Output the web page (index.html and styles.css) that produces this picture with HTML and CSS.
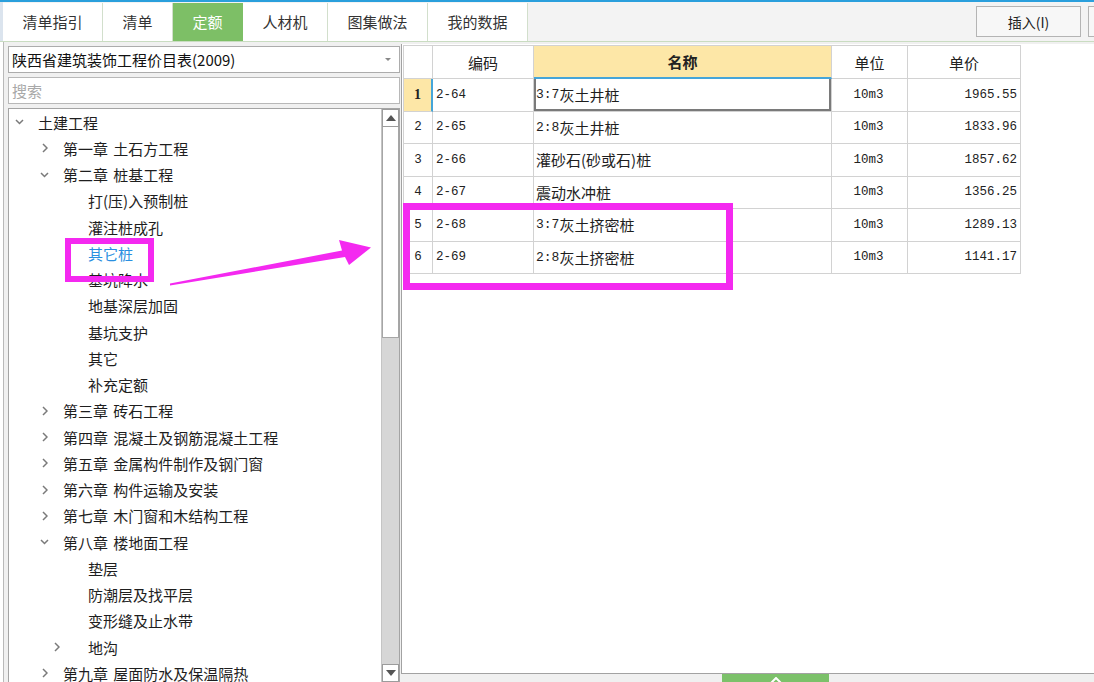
FILE: index.html
```html
<!DOCTYPE html>
<html lang="zh-CN">
<head>
<meta charset="utf-8">
<title>定额</title>
<link rel="stylesheet" href="styles.css">
</head>
<body>
<div class="topline"></div>
<div class="tabbar">
  <div class="edge"></div>
  <div class="tab">清单指引</div>
  <div class="tab">清单</div>
  <div class="tab active">定额</div>
  <div class="tab">人材机</div>
  <div class="tab">图集做法</div>
  <div class="tab">我的数据</div>
  <div class="spacer"></div>
  <button class="btn">插入(I)</button>
  <button class="btn btn-cut"></button>
</div>
<div class="main">
  <div class="lstrip"></div>
  <div class="left">
    <div class="select">陕西省建筑装饰工程价目表(2009)<span class="caret"></span></div>
    <div class="search">搜索</div>
    <div class="treebox">
      <div class="tree">
        <div class="row l0"><span class="tg"><svg width="9" height="6" viewBox="0 0 9 6"><polyline points="1,1 4.5,4.5 8,1" class="chev"/></svg></span><span>土建工程</span></div>
        <div class="row l1"><span class="tg"><svg width="6" height="10" viewBox="0 0 6 10"><polyline points="1,1 5,5 1,9" class="chev"/></svg></span><span>第一章 土石方工程</span></div>
        <div class="row l1"><span class="tg"><svg width="9" height="6" viewBox="0 0 9 6"><polyline points="1,1 4.5,4.5 8,1" class="chev"/></svg></span><span>第二章 桩基工程</span></div>
        <div class="row l2"><span class="tg"></span><span>打(压)入预制桩</span></div>
        <div class="row l2"><span class="tg"></span><span>灌注桩成孔</span></div>
        <div class="row l2 sel"><span class="tg"></span><span>其它桩</span></div>
        <div class="row l2"><span class="tg"></span><span>基坑降水</span></div>
        <div class="row l2"><span class="tg"></span><span>地基深层加固</span></div>
        <div class="row l2"><span class="tg"></span><span>基坑支护</span></div>
        <div class="row l2"><span class="tg"></span><span>其它</span></div>
        <div class="row l2"><span class="tg"></span><span>补充定额</span></div>
        <div class="row l1"><span class="tg"><svg width="6" height="10" viewBox="0 0 6 10"><polyline points="1,1 5,5 1,9" class="chev"/></svg></span><span>第三章 砖石工程</span></div>
        <div class="row l1"><span class="tg"><svg width="6" height="10" viewBox="0 0 6 10"><polyline points="1,1 5,5 1,9" class="chev"/></svg></span><span>第四章 混凝土及钢筋混凝土工程</span></div>
        <div class="row l1"><span class="tg"><svg width="6" height="10" viewBox="0 0 6 10"><polyline points="1,1 5,5 1,9" class="chev"/></svg></span><span>第五章 金属构件制作及钢门窗</span></div>
        <div class="row l1"><span class="tg"><svg width="6" height="10" viewBox="0 0 6 10"><polyline points="1,1 5,5 1,9" class="chev"/></svg></span><span>第六章 构件运输及安装</span></div>
        <div class="row l1"><span class="tg"><svg width="6" height="10" viewBox="0 0 6 10"><polyline points="1,1 5,5 1,9" class="chev"/></svg></span><span>第七章 木门窗和木结构工程</span></div>
        <div class="row l1"><span class="tg"><svg width="9" height="6" viewBox="0 0 9 6"><polyline points="1,1 4.5,4.5 8,1" class="chev"/></svg></span><span>第八章 楼地面工程</span></div>
        <div class="row l2"><span class="tg"></span><span>垫层</span></div>
        <div class="row l2"><span class="tg"></span><span>防潮层及找平层</span></div>
        <div class="row l2"><span class="tg"></span><span>变形缝及止水带</span></div>
        <div class="row l2x"><span class="tg"><svg width="6" height="10" viewBox="0 0 6 10"><polyline points="1,1 5,5 1,9" class="chev"/></svg></span><span>地沟</span></div>
        <div class="row l1"><span class="tg"><svg width="6" height="10" viewBox="0 0 6 10"><polyline points="1,1 5,5 1,9" class="chev"/></svg></span><span>第九章 屋面防水及保温隔热</span></div>
      </div>
      <div class="vscroll">
        <div class="sbtn"><svg width="10" height="6" viewBox="0 0 10 6"><polygon points="0,6 5,0 10,6" fill="#555"/></svg></div>
        <div class="thumb"></div>
        <div class="track"></div>
        <div class="sbtn"><svg width="10" height="6" viewBox="0 0 10 6"><polygon points="0,0 10,0 5,6" fill="#555"/></svg></div>
      </div>
    </div>
  </div>
  <div class="right">
    <div class="panel">
      <div class="grid">
        <div class="c h"></div>
        <div class="c h">编码</div>
        <div class="c h hsel">名称</div>
        <div class="c h">单位</div>
        <div class="c h">单价</div>

        <div class="c n nsel">1</div>
        <div class="c code csel">2-64</div>
        <div class="c name namesel"><span class="m">3:7</span>灰土井桩</div>
        <div class="c unit">10m3</div>
        <div class="c price">1965.55</div>

        <div class="c n">2</div>
        <div class="c code">2-65</div>
        <div class="c name"><span class="m">2:8</span>灰土井桩</div>
        <div class="c unit">10m3</div>
        <div class="c price">1833.96</div>

        <div class="c n">3</div>
        <div class="c code">2-66</div>
        <div class="c name">灌砂石(砂或石)桩</div>
        <div class="c unit">10m3</div>
        <div class="c price">1857.62</div>

        <div class="c n">4</div>
        <div class="c code">2-67</div>
        <div class="c name">震动水冲桩</div>
        <div class="c unit">10m3</div>
        <div class="c price">1356.25</div>

        <div class="c n">5</div>
        <div class="c code">2-68</div>
        <div class="c name"><span class="m">3:7</span>灰土挤密桩</div>
        <div class="c unit">10m3</div>
        <div class="c price">1289.13</div>

        <div class="c n">6</div>
        <div class="c code">2-69</div>
        <div class="c name"><span class="m">2:8</span>灰土挤密桩</div>
        <div class="c unit">10m3</div>
        <div class="c price">1141.17</div>
      </div>
    </div>
    <div class="footer">
      <div class="gtab"><svg width="12" height="7" viewBox="0 0 12 7"><polyline points="1,6 6,1 11,6" fill="none" stroke="#fff" stroke-width="2"/></svg></div>
    </div>
  </div>
</div>
<svg class="anno" width="1094" height="682" viewBox="0 0 1094 682">
  <rect x="68" y="241" width="83" height="38" fill="none" stroke="#f429f0" stroke-width="6"/>
  <rect x="406.5" y="206.5" width="323" height="80" fill="none" stroke="#f429f0" stroke-width="7"/>
  <polygon points="170,283.5 342,250.5 339,240 371,247.5 349,265 345,257 170,285.5" fill="#f429f0"/>
</svg>
</body>
</html>
```

FILE: styles.css
```css
* { box-sizing: border-box; }
html, body { margin: 0; padding: 0; }
body {
  width: 1094px;
  height: 682px;
  overflow: hidden;
  position: relative;
  background: #f0f0f0;
  font-family: "Noto Sans CJK SC", "Noto Sans", sans-serif;
  color: #222;
}

.topline { height: 2px; background: #2a9fdc; }

.tabbar {
  display: flex;
  height: 40px;
  background: #f3f3f3;
  border-bottom: 1px solid #c9dcc1;
}
.edge { width: 3px; flex-shrink: 0; background: #dbe4ee; }
.tab {
  flex-shrink: 0;
  margin-top: 1px;
  padding: 0 19.5px 2px;
  background: #fff;
  border-right: 1px solid #d2dfcc;
  display: flex;
  align-items: center;
  font-size: 15px;
  color: #333;
}
.tab.active { background: #7dbf66; color: #fff; border-right-color: #7dbf66; }
.spacer { flex: 1; }
.btn {
  flex-shrink: 0;
  margin-top: 4px;
  height: 31px;
  width: 105px;
  border: 1px solid #b4b4b4;
  background: #f7f7f7;
  font-family: "Noto Sans CJK SC", sans-serif;
  font-size: 14px;
  color: #222;
  padding: 0;
}
.btn-cut { width: 6px; margin-left: 7px; border-right: none; }

.main { display: flex; height: 641px; }
.lstrip { width: 4px; flex-shrink: 0; background: #fff; border-right: 1px solid #b9b9b9; }
.left {
  width: 392px;
  flex-shrink: 0;
  margin-left: 4px;
  padding-top: 4px;
  display: flex;
  flex-direction: column;
}
.select {
  position: relative;
  height: 27px;
  border: 1px solid #acacac;
  background: #fff;
  font-size: 15px;
  line-height: 25px;
  padding-left: 3px;
  color: #111;
}
.caret {
  position: absolute;
  right: 8px;
  top: 11px;
  width: 0; height: 0;
  border-left: 3px solid transparent;
  border-right: 3px solid transparent;
  border-top: 3px solid #888;
}
.search {
  margin-top: 4px;
  height: 27px;
  border: 1px solid #b8b8b8;
  background: #fff;
  font-size: 15px;
  line-height: 25px;
  padding-left: 3px;
  color: #a8a8a8;
}
.treebox {
  margin-top: 4px;
  flex: 1;
  border: 1px solid #a4a4a4;
  background: #fff;
  display: flex;
  overflow: hidden;
}
.tree { flex: 1; padding-top: 0; overflow: hidden; }
.row {
  height: 26.25px;
  display: flex;
  align-items: center;
  font-size: 15px;
  white-space: nowrap;
  color: #1e1e1e;
  word-spacing: 2px;
}
.row.l0 { padding-left: 3px; }
.row.l1 { padding-left: 28px; }
.row.l2 { padding-left: 53px; }
.row.l2x { padding-left: 53px; }
.tg {
  width: 15px;
  margin-right: 11px;
  display: flex;
  justify-content: center;
  align-items: center;
  flex-shrink: 0;
}
.row.l2x .tg { justify-content: flex-start; margin-left: -12px; width: 27px; padding-left: 4px; }
.chev { fill: none; stroke: #7a7a7a; stroke-width: 1.5; }
.row.sel { color: #2a8fe0; }

.vscroll {
  width: 18px;
  flex-shrink: 0;
  display: flex;
  flex-direction: column;
  background: #d6d6d6;
  border-left: 1px solid #c4c4c4;
}
.sbtn {
  height: 18px;
  background: #fff;
  border: 1px solid #9c9c9c;
  display: flex;
  align-items: center;
  justify-content: center;
}
.thumb { height: 211px; background: #fff; border: 1px solid #a6a6a6; border-top: none; }
.track { flex: 1; }

.right { flex: 1; display: flex; flex-direction: column; margin-left: 1px; }
.panel {
  flex: 1;
  margin-top: 2px;
  background: #fff;
  border-left: 1px solid #a2a2a2;
  border-bottom: 1px solid #a2a2a2;
  padding: 1px 0 0 1px;
}
.grid {
  display: grid;
  grid-template-columns: 29px 101px 298px 76px 113px;
  grid-template-rows: 33px;
  grid-auto-rows: 32.5px;
  width: max-content;
  border-top: 1px solid #d2d2d2;
  border-left: 1px solid #d2d2d2;
}
.c {
  border-right: 1px solid #d2d2d2;
  border-bottom: 1px solid #d2d2d2;
  display: flex;
  align-items: center;
  white-space: nowrap;
  overflow: hidden;
}
.h { justify-content: center; font-size: 15px; color: #222; }
.hsel { background: #fde7a7; border-bottom: 2px solid #45a5d9; font-weight: bold; }
.n {
  justify-content: center;
  font-family: "Liberation Mono", monospace;
  font-size: 12.5px;
  color: #222;
}
.nsel {
  background: #fde7a7;
  border-right: 2px solid #45a5d9;
  font-family: "Liberation Serif", serif;
  font-weight: bold;
  font-size: 14px;
}
.code {
  padding-left: 3px;
  font-family: "Liberation Mono", monospace;
  font-size: 12.5px;
  color: #222;
}
.name { padding-left: 2px; font-size: 15px; color: #1e1e1e; }
.namesel { box-shadow: inset 2px 0 0 #7a7a7a, inset -2px 0 0 #7a7a7a, inset 0 -2px 0 #7a7a7a; }
.m { font-family: "Liberation Mono", monospace; font-size: 13px; }
.unit {
  justify-content: center;
  padding-right: 2px;
  font-family: "Liberation Mono", monospace;
  font-size: 12.5px;
  color: #222;
}
.price {
  justify-content: flex-end;
  padding-right: 3px;
  font-family: "Liberation Mono", monospace;
  font-size: 12.5px;
  color: #222;
}

.footer { height: 9px; flex-shrink: 0; }
.gtab {
  margin-left: 321px;
  width: 107px;
  height: 10px;
  background: #7cc16a;
  display: flex;
  justify-content: center;
  align-items: flex-end;
}

.anno { position: absolute; left: 0; top: 0; pointer-events: none; }
```
